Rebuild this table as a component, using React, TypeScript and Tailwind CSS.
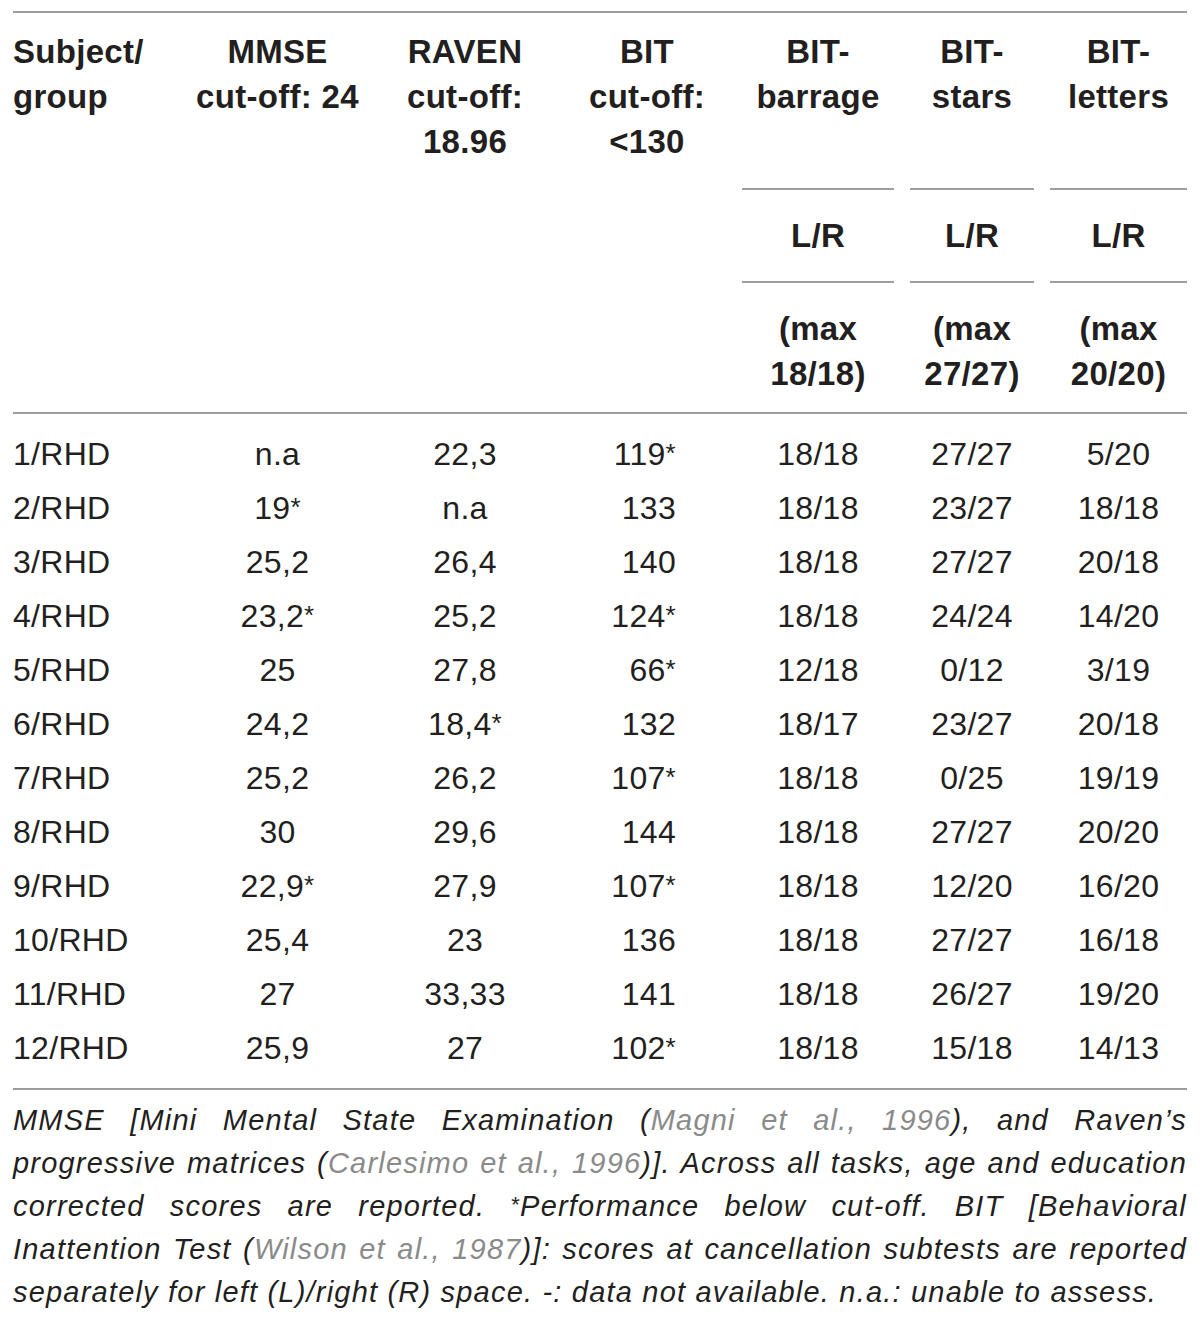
const rows: string[][] = [
	["1/RHD", "n.a", "22,3", "119*", "18/18", "27/27", "5/20"],
	["2/RHD", "19*", "n.a", "133", "18/18", "23/27", "18/18"],
	["3/RHD", "25,2", "26,4", "140", "18/18", "27/27", "20/18"],
	["4/RHD", "23,2*", "25,2", "124*", "18/18", "24/24", "14/20"],
	["5/RHD", "25", "27,8", "66*", "12/18", "0/12", "3/19"],
	["6/RHD", "24,2", "18,4*", "132", "18/17", "23/27", "20/18"],
	["7/RHD", "25,2", "26,2", "107*", "18/18", "0/25", "19/19"],
	["8/RHD", "30", "29,6", "144", "18/18", "27/27", "20/20"],
	["9/RHD", "22,9*", "27,9", "107*", "18/18", "12/20", "16/20"],
	["10/RHD", "25,4", "23", "136", "18/18", "27/27", "16/18"],
	["11/RHD", "27", "33,33", "141", "18/18", "26/27", "19/20"],
	["12/RHD", "25,9", "27", "102*", "18/18", "15/18", "14/13"],
]

const grid = "grid grid-cols-[172px_185px_190px_174px_168px_140px_145px]"

function Value({ text }: { text: string }) {
	if (text.endsWith("*")) {
		return (
			<>
				{text.slice(0, -1)}
				<span className="align-[3px] text-[26px] leading-[0]">*</span>
			</>
		)
	}
	return <>{text}</>
}

function Cite({ children }: { children: React.ReactNode }) {
	return <span className="text-[#8a8a8a]">{children}</span>
}

export default function App() {
	const subCol = (last: boolean) => (last ? "pl-2" : "px-2")

	return (
		<div className="min-h-[1323px] bg-white px-[13px] pt-[11px] font-['Liberation_Sans',Arial,sans-serif] text-[#231f20]">
			{/* Header */}
			<div className="border-y-2 border-[#9d9d9d] text-[33px] font-bold leading-[45px] tracking-[0.3px]">
				<div className={grid}>
					<div className="pt-4 pb-[26px]">
						Subject/
						<br />
						group
					</div>
					<div className="pt-4 pb-[26px] text-center">
						MMSE
						<br />
						cut-off: 24
					</div>
					<div className="pt-4 pb-[26px] text-center">
						RAVEN
						<br />
						cut-off:
						<br />
						18.96
					</div>
					<div className="pt-4 pb-[26px] text-center">
						BIT
						<br />
						cut-off:
						<br />
						&lt;130
					</div>
					{["barrage", "stars", "letters"].map((name, i) => (
						<div key={name} className={subCol(i === 2)}>
							<div className="h-full border-b-2 border-[#9d9d9d] pt-4 text-center">
								BIT-
								<br />
								{name}
							</div>
						</div>
					))}

					<div className="col-span-4" />
					{["a", "b", "c"].map((k, i) => (
						<div key={k} className={subCol(i === 2)}>
							<div className="border-b-2 border-[#9d9d9d] py-[23px] text-center">L/R</div>
						</div>
					))}

					<div className="col-span-4" />
					{["18/18)", "27/27)", "20/20)"].map((m, i) => (
						<div key={m} className={subCol(i === 2)}>
							<div className="pt-[23px] pb-4 text-center">
								(max
								<br />
								{m}
							</div>
						</div>
					))}
				</div>
			</div>

			{/* Body */}
			<div className="border-b-2 border-[#9d9d9d] pt-[13px] pb-[13px] text-[32px] leading-[54px] tracking-[0.3px]">
				{rows.map((r) => (
					<div key={r[0]} className={grid}>
						<div>{r[0]}</div>
						<div className="text-center">
							<Value text={r[1]} />
						</div>
						<div className="text-center">
							<Value text={r[2]} />
						</div>
						<div className="pr-[58px] text-right">
							<Value text={r[3]} />
						</div>
						<div className="px-2 text-center">{r[4]}</div>
						<div className="px-2 text-center">{r[5]}</div>
						<div className="pl-2 text-center">{r[6]}</div>
					</div>
				))}
			</div>

			{/* Footnote */}
			<div className="pt-[9px] text-[29px] leading-[43px] tracking-[1.2px] italic">
				<div className="text-justify [text-align-last:justify]">
					MMSE [Mini Mental State Examination (<Cite>Magni et al., 1996</Cite>), and Raven’s
				</div>
				<div className="text-justify [text-align-last:justify]">
					progressive matrices (<Cite>Carlesimo et al., 1996</Cite>)]. Across all tasks, age and education
				</div>
				<div className="text-justify [text-align-last:justify]">
					corrected scores are reported.{" "}
					<span className="align-[4px] text-[22px] leading-[0]">*</span>Performance below cut-off. BIT
					[Behavioral
				</div>
				<div className="text-justify [text-align-last:justify]">
					Inattention Test (<Cite>Wilson et al., 1987</Cite>)]: scores at cancellation subtests are reported
				</div>
				<div>separately for left (L)/right (R) space. -: data not available. n.a.: unable to assess.</div>
			</div>
		</div>
	)
}
